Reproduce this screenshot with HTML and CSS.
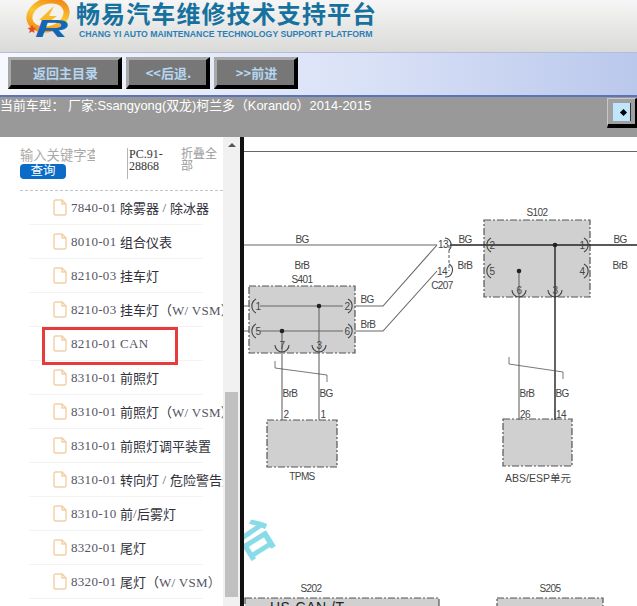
FILE: index.html
```html
<!DOCTYPE html>
<html>
<head>
    <title>畅易汽车维修技术支持平台</title>
    <link rel="stylesheet" href="styles.css">
</head>
<body>
<div class="page">
    <div class="header">
        <svg class="logo" width="50" height="40" viewBox="0 0 50 40">
            <defs>
                <linearGradient id="ring" x1="0" y1="1" x2="1" y2="0">
                    <stop offset="0" stop-color="#ef8412"/>
                    <stop offset="0.5" stop-color="#fcc732"/>
                    <stop offset="1" stop-color="#ee7a10"/>
                </linearGradient>
            </defs>
            <ellipse cx="24" cy="15" rx="19" ry="14" transform="rotate(-18 24 15)" fill="#f4f2ea" stroke="url(#ring)" stroke-width="6"/>
            <path d="M30 6 15 20 22 20 15 29 33 16 25 16Z" fill="#f9b92c"/>
            <path d="M8 25 9.500 27.500 12 28 10 30 10.500 33 8 31.500 5 33 6 30 3.500 28 6.500 27.500Z" fill="#e2501e"/>
            <text class="logo-r" transform="translate(11 37) scale(1.9 1)">R</text>
        </svg>
        <div class="brand">
            <div class="brand-cn">畅易汽车维修技术支持平台</div>
            <div class="brand-en">CHANG YI AUTO MAINTENANCE TECHNOLOGY SUPPORT PLATFORM</div>
        </div>
    </div>

    <div class="toolbar">
        <a class="tool-btn btn-home">返回主目录</a>
        <a class="tool-btn btn-nav">&lt;&lt;后退.</a>
        <a class="tool-btn btn-nav">&gt;&gt;前进</a>
    </div>

    <div class="infobar">
        <span class="car-info">当前车型： 厂家:Ssangyong(双龙)柯兰多（Korando）2014-2015</span>
        <div class="toggle-btn"><div class="toggle-inner"><span class="toggle-dot"></span></div></div>
    </div>

    <div class="main">
        <div class="sidebar">
            <div class="search">
                <div class="search-col">
                    <div class="search-input">输入关键字查询</div>
                    <div class="search-btn">查询</div>
                </div>
                <div class="doc-no">PC.91-28868</div>
                <div class="fold">折叠全部</div>
            </div>
            <ul class="tree">
                <li><svg class="doc" viewBox="0 0 14 17"><path d="M1 2.500Q1 1 2.500 1H9L13 5V14.500Q13 16 11.500 16H2.500Q1 16 1 14.500ZM9 1V5H13"/></svg>7840-01 <b>除雾器</b> / <b>除冰器</b></li>
                <li><svg class="doc" viewBox="0 0 14 17"><path d="M1 2.500Q1 1 2.500 1H9L13 5V14.500Q13 16 11.500 16H2.500Q1 16 1 14.500ZM9 1V5H13"/></svg>8010-01 <b>组合仪表</b></li>
                <li><svg class="doc" viewBox="0 0 14 17"><path d="M1 2.500Q1 1 2.500 1H9L13 5V14.500Q13 16 11.500 16H2.500Q1 16 1 14.500ZM9 1V5H13"/></svg>8210-03 <b>挂车灯</b></li>
                <li><svg class="doc" viewBox="0 0 14 17"><path d="M1 2.500Q1 1 2.500 1H9L13 5V14.500Q13 16 11.500 16H2.500Q1 16 1 14.500ZM9 1V5H13"/></svg>8210-03 <b>挂车灯（</b>W/ VSM）</li>
                <li class="current"><svg class="doc" viewBox="0 0 14 17"><path d="M1 2.500Q1 1 2.500 1H9L13 5V14.500Q13 16 11.500 16H2.500Q1 16 1 14.500ZM9 1V5H13"/></svg>8210-01 CAN<span class="red-box"></span></li>
                <li><svg class="doc" viewBox="0 0 14 17"><path d="M1 2.500Q1 1 2.500 1H9L13 5V14.500Q13 16 11.500 16H2.500Q1 16 1 14.500ZM9 1V5H13"/></svg>8310-01 <b>前照灯</b></li>
                <li><svg class="doc" viewBox="0 0 14 17"><path d="M1 2.500Q1 1 2.500 1H9L13 5V14.500Q13 16 11.500 16H2.500Q1 16 1 14.500ZM9 1V5H13"/></svg>8310-01 <b>前照灯（</b>W/ VSM）</li>
                <li><svg class="doc" viewBox="0 0 14 17"><path d="M1 2.500Q1 1 2.500 1H9L13 5V14.500Q13 16 11.500 16H2.500Q1 16 1 14.500ZM9 1V5H13"/></svg>8310-01 <b>前照灯调平装置</b></li>
                <li><svg class="doc" viewBox="0 0 14 17"><path d="M1 2.500Q1 1 2.500 1H9L13 5V14.500Q13 16 11.500 16H2.500Q1 16 1 14.500ZM9 1V5H13"/></svg>8310-01 <b>转向灯</b> / <b>危险警告灯</b></li>
                <li><svg class="doc" viewBox="0 0 14 17"><path d="M1 2.500Q1 1 2.500 1H9L13 5V14.500Q13 16 11.500 16H2.500Q1 16 1 14.500ZM9 1V5H13"/></svg>8310-10 <b>前</b>/<b>后雾灯</b></li>
                <li><svg class="doc" viewBox="0 0 14 17"><path d="M1 2.500Q1 1 2.500 1H9L13 5V14.500Q13 16 11.500 16H2.500Q1 16 1 14.500ZM9 1V5H13"/></svg>8320-01 <b>尾灯</b></li>
                <li><svg class="doc" viewBox="0 0 14 17"><path d="M1 2.500Q1 1 2.500 1H9L13 5V14.500Q13 16 11.500 16H2.500Q1 16 1 14.500ZM9 1V5H13"/></svg>8320-01 <b>尾灯（</b>W/ VSM）</li>
            </ul>
        </div>

        <div class="scrollbar">
            <span class="scroll-up"></span>
            <div class="scroll-thumb"></div>
        </div>
        <div class="divider"></div>

        <div class="diagram">
            <svg width="393" height="469" viewBox="244 137 393 469">
                <!-- top rule of the drawing -->
                <path class="rule" d="M244 151.500H637"/>

                <!-- boxes -->
                <rect class="box" x="249" y="286" width="106" height="67"/>
                <rect class="box" x="484" y="220" width="106" height="77"/>
                <rect class="box" x="267" y="420" width="70" height="47"/>
                <rect class="box" x="503" y="419" width="69" height="47"/>
                <rect class="box" x="245" y="598" width="194" height="30"/>
                <rect class="box" x="497" y="598" width="106" height="30"/>

                <!-- S401 wires -->
                <path class="wire" d="M244 245H437"/>
                <path class="wire" d="M244 306H249M260 306H343M355 306H383L437 245"/>
                <path class="wire" d="M244 331H249M260 331H343M355 331H383L437 271"/>
                <path class="wire" d="M319 306V420M282 331V420"/>
                <path class="thin" d="M275 361V368L327 375V382"/>
                <circle class="dot" cx="319" cy="306" r="2.300"/>
                <circle class="dot" cx="282" cy="331" r="2.300"/>

                <!-- S102 wires -->
                <path class="wire-black" d="M450 245H637"/>
                <path class="wire-black" d="M555 245V420"/>
                <path class="wire" d="M519 271V420"/>
                <path class="thin" d="M509 357V364L563 372V379"/>
                <circle class="dot" cx="555" cy="245" r="2.300"/>
                <circle class="dot" cx="519" cy="271" r="2.300"/>
                <path class="dash" d="M449 245V271"/>

                <!-- connector arcs -->
                <path class="pin" d="M256 299A8 8 0 0 0 256 313M256 324A8 8 0 0 0 256 338"/>
                <path class="pin" d="M348 299A8 8 0 0 1 348 313M348 324A8 8 0 0 1 348 338"/>
                <path class="pin" d="M275 345A7 7 0 0 0 289 345M312 345A7 7 0 0 0 326 345"/>
                <path class="pin" d="M445 238A7 7 0 0 1 449 250M445 277A7 7 0 0 0 449 264"/>
                <path class="pin" d="M491 238A8 8 0 0 0 491 252M491 264A8 8 0 0 0 491 278"/>
                <path class="pin" d="M584 238A8 8 0 0 1 584 252M584 264A8 8 0 0 1 584 278"/>
                <path class="pin" d="M512 290A7 7 0 0 0 526 290M548 290A7 7 0 0 0 562 290"/>

                <!-- labels -->
                <text x="302" y="243">BG</text>
                <text x="302" y="269">BrB</text>
                <text x="302" y="283">S401</text>
                <text x="367" y="303">BG</text>
                <text x="368" y="328">BrB</text>
                <text x="443" y="248">13</text>
                <text x="442" y="275">14</text>
                <text x="442" y="289">C207</text>
                <text x="465" y="243">BG</text>
                <text x="465" y="269">BrB</text>
                <text x="620" y="243">BG</text>
                <text x="620" y="269">BrB</text>
                <text x="537" y="216">S102</text>
                <text x="258" y="310">1</text>
                <text x="347" y="310">2</text>
                <text x="258" y="335">5</text>
                <text x="347" y="335">6</text>
                <text x="282" y="349">7</text>
                <text x="319" y="349">3</text>
                <text x="492" y="249">2</text>
                <text x="582" y="249">1</text>
                <text x="492" y="275">5</text>
                <text x="582" y="275">4</text>
                <text x="519" y="294">6</text>
                <text x="555" y="294">3</text>
                <text x="290" y="397">BrB</text>
                <text x="326" y="397">BG</text>
                <text x="527" y="397">BrB</text>
                <text x="562" y="397">BG</text>
                <text x="286" y="418">2</text>
                <text x="323" y="418">1</text>
                <text x="525" y="418">26</text>
                <text x="561" y="418">14</text>
                <text x="302" y="480">TPMS</text>
                <text x="538" y="482" class="label-wide">ABS/ESP单元</text>
                <text x="311" y="592">S202</text>
                <text x="550" y="592">S205</text>
                <text x="270" y="612" class="label-big">HS-CAN /T</text>

                <text x="252" y="553" class="stamp" transform="rotate(-32 252 535)">台</text>
            </svg>
        </div>
    </div>
</div>
</body>
</html>
```

FILE: styles.css
```css
* {
    box-sizing: border-box;
}
body {
    margin: 0;
    background-color: #ffffff;
    font-family: "Liberation Sans", "Noto Sans CJK SC", sans-serif;
}
.page {
    width: 637px;
    height: 606px;
    overflow: hidden;
    display: flex;
    flex-direction: column;
}

/* header */
.header {
    height: 52px;
    flex: none;
    display: flex;
    padding-left: 24px;
    background: linear-gradient(#f6f6f6, #dadad8);
}
.logo {
    flex: none;
}
.logo-r {
    font-family: "Liberation Sans", sans-serif;
    font-weight: bold;
    font-style: italic;
    font-size: 24px;
    fill: #1266b4;
}
.brand {
    margin-left: 2px;
}
.brand-cn {
    font-family: "Noto Sans CJK SC", sans-serif;
    font-weight: bold;
    font-size: 24px;
    line-height: 26px;
    letter-spacing: 1.100px;
    color: #17719f;
    white-space: nowrap;
}
.brand-en {
    margin: 3px 0 0 3px;
    font-size: 8.700px;
    line-height: 11px;
    font-weight: bold;
    color: #2c7fb6;
    white-space: nowrap;
}

/* toolbar */
.toolbar {
    height: 45px;
    flex: none;
    display: flex;
    gap: 4px;
    padding: 4px 0 0 8px;
    border-top: 1px solid #b4bedc;
    border-bottom: 2px solid #5a74bc;
    background: linear-gradient(to right, #f6f8fe, #d8e0f6 60%, #bac8ec);
}
.tool-btn {
    height: 32px;
    display: flex;
    align-items: center;
    justify-content: center;
    padding-left: 2px;
    background-color: #777777;
    border-style: solid;
    border-width: 3px 4px 4px 3px;
    border-color: #a8a8a8 #000000 #000000 #a8a8a8;
    color: #b4d6f0;
    font-family: "Noto Sans CJK SC", sans-serif;
    font-size: 13px;
    font-weight: bold;
}
.btn-home {
    width: 114px;
}
.btn-nav {
    width: 84px;
}

/* car info bar */
.infobar {
    height: 40px;
    flex: none;
    display: flex;
    justify-content: space-between;
    background-color: #999999;
}
.car-info {
    font-size: 12.900px;
    line-height: 17px;
    color: #ffffff;
    white-space: nowrap;
}
.toggle-btn {
    width: 30px;
    height: 30px;
    margin-top: 1px;
    padding: 4px 4px 3px 5px;
    background-color: #a0a0a0;
    border-style: solid;
    border-width: 1px 2px 4px 1px;
    border-color: #c8c8c8 #000000 #000000 #c8c8c8;
}
.toggle-inner {
    width: 100%;
    height: 100%;
    display: flex;
    align-items: center;
    justify-content: flex-end;
    padding-right: 4px;
    background-color: #bfe6fb;
    border-right: 1px solid #333333;
}
.toggle-dot {
    width: 5px;
    height: 5px;
    background-color: #000000;
    transform: rotate(45deg);
}

/* main area */
.main {
    flex: 1;
    min-height: 0;
    display: flex;
}
.sidebar {
    width: 223px;
    flex: none;
    overflow: hidden;
    background-color: #ffffff;
}
.search {
    height: 54px;
    margin-left: 20px;
    display: flex;
    padding-top: 11px;
    border-bottom: 1px dashed #c4c4c4;
}
.search-col {
    width: 75px;
    margin-right: 32px;
    flex: none;
}
.search-input {
    width: 75px;
    height: 16px;
    overflow: hidden;
    font-size: 13.300px;
    line-height: 16px;
    color: #a9a9a9;
    white-space: nowrap;
}
.search-btn {
    width: 46px;
    height: 15px;
    background-color: #0a6cc6;
    border-radius: 4px;
    color: #ffffff;
    font-size: 12.500px;
    line-height: 15px;
    text-align: center;
}
.doc-no {
    width: 54px;
    height: 31px;
    flex: none;
    padding-left: 1px;
    border-left: 1px solid #b5b5b5;
    font-family: "Liberation Serif", serif;
    font-size: 12px;
    line-height: 12px;
    color: #333333;
}
.fold {
    width: 38px;
    font-size: 12px;
    line-height: 12px;
    color: #9a9a9a;
}
.tree {
    list-style: none;
    margin: 0 0 0 29px;
    padding: 0;
    width: 174px;
}
.tree li {
    position: relative;
    height: 34px;
    display: flex;
    align-items: center;
    padding-left: 24px;
    border-bottom: 1px solid #f3f3f3;
    font-family: "Liberation Serif", "Noto Sans CJK SC", serif;
    font-size: 13px;
    letter-spacing: 0.3px;
    color: #55555f;
    white-space: pre;
}
.tree b {
    font-family: "Noto Sans CJK SC", sans-serif;
    font-size: 13px;
    font-weight: normal;
    letter-spacing: 0;
    color: #30303a;
}
.doc {
    width: 14px;
    height: 17px;
    flex: none;
    margin-right: 4px;
    fill: #ffffff;
    stroke: #f4cfa6;
    stroke-width: 1.400;
}
.red-box {
    position: absolute;
    left: 13px;
    top: 0;
    width: 136px;
    height: 38px;
    border: 3px solid #e63c3c;
}

/* scrollbar */
.scrollbar {
    width: 17px;
    flex: none;
    position: relative;
    background-color: #f1f1f1;
}
.scroll-up {
    position: absolute;
    left: 5px;
    top: 6px;
    border-left: 4px solid transparent;
    border-right: 4px solid transparent;
    border-bottom: 4px solid #555555;
}
.scroll-thumb {
    position: absolute;
    left: 2px;
    top: 255px;
    width: 13px;
    height: 205px;
    background-color: #c0c0c0;
}
.divider {
    width: 4px;
    flex: none;
    background-color: #111111;
}

/* wiring diagram */
.diagram {
    flex: 1;
    background-color: #ffffff;
}
.diagram svg {
    display: block;
}
.diagram text {
    font-family: "Liberation Sans", sans-serif;
    font-size: 10px;
    letter-spacing: -0.6px;
    text-anchor: middle;
    fill: #444444;
}
.rule {
    stroke: #666666;
    stroke-width: 1;
    fill: none;
}
.box {
    fill: #d0d0d0;
    stroke: #555555;
    stroke-width: 1.200;
    stroke-dasharray: 7 2 2 2;
}
.wire {
    stroke: #666666;
    stroke-width: 1.100;
    fill: none;
}
.wire-black {
    stroke: #222222;
    stroke-width: 1.400;
    fill: none;
}
.thin {
    stroke: #555555;
    stroke-width: 0.800;
    fill: none;
}
.dash {
    stroke: #555555;
    stroke-dasharray: 3 2;
    fill: none;
}
.pin {
    stroke: #444444;
    stroke-width: 1.100;
    fill: none;
}
.dot {
    fill: #222222;
}
.diagram .label-wide {
    font-family: "Liberation Sans", "Noto Sans CJK SC", sans-serif;
    font-size: 10.500px;
    letter-spacing: 0;
}
.diagram .label-big {
    font-size: 14px;
    letter-spacing: 0.5px;
    text-anchor: start;
    fill: #222222;
}
.diagram .stamp {
    font-family: "Noto Sans CJK SC", sans-serif;
    font-size: 42px;
    font-weight: bold;
    letter-spacing: 0;
    fill: #8adbe8;
}
```
